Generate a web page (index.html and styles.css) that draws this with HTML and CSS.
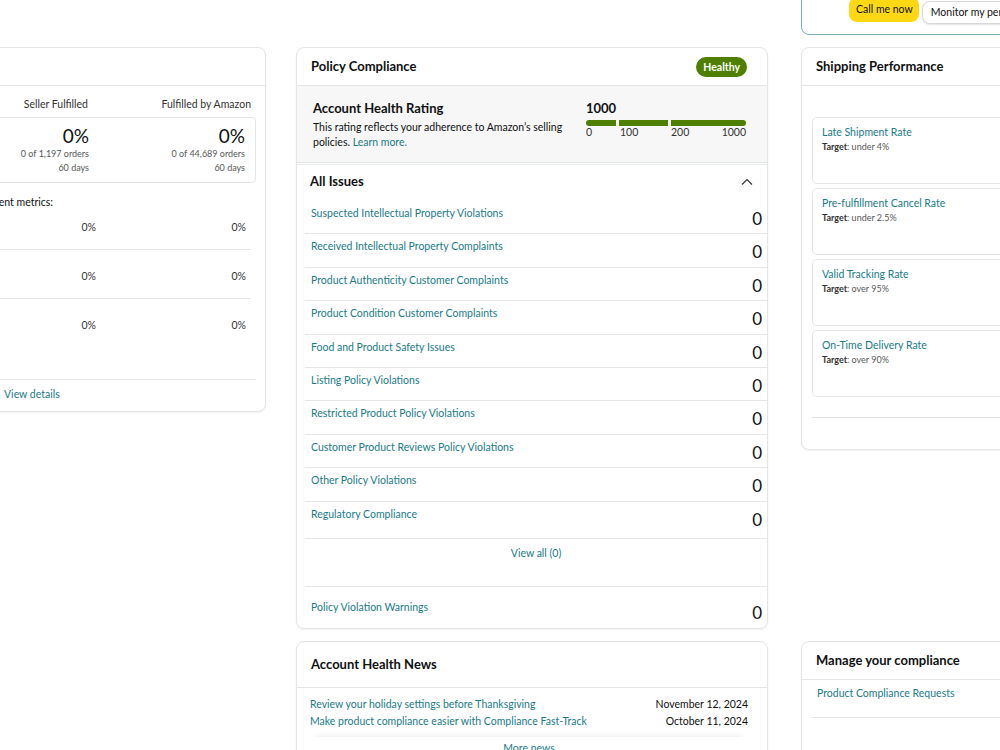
FILE: index.html
```html
<!DOCTYPE html>
<html lang="en">
<head>
<meta charset="utf-8">
<title>Account Health</title>
<link rel="stylesheet" href="styles.css">
</head>
<body>
<div class="page">
  <div class="banner">
    <span class="btn btn-call">Call me now</span>
    <span class="btn btn-monitor">Monitor my performance</span>
  </div>

  <div class="card card-left">
    <div class="card-head"><span>Customer Service Performance</span></div>
    <div class="left-body">
      <div class="fhead">
        <span class="flabel"></span>
        <span class="fa">Seller Fulfilled</span>
        <span class="fb">Fulfilled by Amazon</span>
      </div>
      <div class="odr-box">
        <div class="odr-label">Order Defect Rate</div>
        <div class="odr-a">
          <div class="pct">0%</div>
          <div class="small">0 of 1,197 orders</div>
          <div class="small">60 days</div>
        </div>
        <div class="odr-b">
          <div class="pct">0%</div>
          <div class="small">0 of 44,689 orders</div>
          <div class="small">60 days</div>
        </div>
      </div>
      <div class="metrics-intro"><span>Order Defect Rate consists of three different metrics:</span></div>
      <div class="mrow mrow-first">
        <span class="mlabel">Negative feedback</span>
        <span class="ma">0%</span>
        <span class="mb">0%</span>
      </div>
      <div class="mrow">
        <span class="mlabel">A-to-z claims</span>
        <span class="ma">0%</span>
        <span class="mb">0%</span>
      </div>
      <div class="mrow mrow-last">
        <span class="mlabel">Chargebacks</span>
        <span class="ma">0%</span>
        <span class="mb">0%</span>
      </div>
      <div class="left-foot"><span class="link">View details</span></div>
    </div>
  </div>

  <div class="card card-policy">
    <div class="card-head">
      <span>Policy Compliance</span>
      <span class="badge">Healthy</span>
    </div>
    <div class="ahr">
      <div class="ahr-text">
        <div class="ahr-title">Account Health Rating</div>
        <div class="ahr-desc">This rating reflects your adherence to Amazon’s selling policies. <span class="link">Learn more.</span></div>
      </div>
      <div class="rating">
        <div class="rating-num">1000</div>
        <div class="bar">
          <span class="seg seg1"></span>
          <span class="seg seg2"></span>
          <span class="seg seg3"></span>
        </div>
        <div class="bar-labels">
          <span class="lab1">0</span>
          <span class="lab2">100</span>
          <span class="lab3"><span>200</span><span>1000</span></span>
        </div>
      </div>
    </div>
    <div class="issues">
      <div class="issues-head">
        <span>All Issues</span>
        <svg class="chev" width="12" height="8" viewBox="0 0 12 8"><polyline points="1,6.5 6,1.5 11,6.5" fill="none" stroke="#333" stroke-width="1.2"/></svg>
      </div>
      <div class="irow"><span class="link">Suspected Intellectual Property Violations</span><span class="zero">0</span></div>
      <div class="irow"><span class="link">Received Intellectual Property Complaints</span><span class="zero">0</span></div>
      <div class="irow"><span class="link">Product Authenticity Customer Complaints</span><span class="zero">0</span></div>
      <div class="irow"><span class="link">Product Condition Customer Complaints</span><span class="zero">0</span></div>
      <div class="irow"><span class="link">Food and Product Safety Issues</span><span class="zero">0</span></div>
      <div class="irow"><span class="link">Listing Policy Violations</span><span class="zero">0</span></div>
      <div class="irow"><span class="link">Restricted Product Policy Violations</span><span class="zero">0</span></div>
      <div class="irow"><span class="link">Customer Product Reviews Policy Violations</span><span class="zero">0</span></div>
      <div class="irow"><span class="link">Other Policy Violations</span><span class="zero">0</span></div>
      <div class="irow irow-last"><span class="link">Regulatory Compliance</span><span class="zero">0</span></div>
      <div class="viewall"><span class="link">View all (0)</span></div>
      <div class="warn"><span class="link">Policy Violation Warnings</span><span class="zero">0</span></div>
    </div>
  </div>

  <div class="col-right">
    <div class="card card-ship">
      <div class="card-head"><span>Shipping Performance</span></div>
      <div class="ship-body">
        <div class="sbox"><div class="link">Late Shipment Rate</div><div class="target"><b>Target</b>: under 4%</div></div>
        <div class="sbox"><div class="link">Pre-fulfillment Cancel Rate</div><div class="target"><b>Target</b>: under 2.5%</div></div>
        <div class="sbox"><div class="link">Valid Tracking Rate</div><div class="target"><b>Target</b>: over 95%</div></div>
        <div class="sbox"><div class="link">On-Time Delivery Rate</div><div class="target"><b>Target</b>: over 90%</div></div>
        <div class="ship-foot"></div>
      </div>
    </div>
  </div>

  <div class="empty"></div>

  <div class="card card-news">
    <div class="card-head news-head"><span>Account Health News</span></div>
    <div class="news-body">
      <div class="nrow"><span class="link">Review your holiday settings before Thanksgiving</span><span>November 12, 2024</span></div>
      <div class="nrow"><span class="link">Make product compliance easier with Compliance Fast-Track</span><span>October 11, 2024</span></div>
      <div class="more"><span class="link">More news</span></div>
    </div>
  </div>

  <div class="col-right">
    <div class="card card-manage">
      <div class="card-head"><span>Manage your compliance</span></div>
      <div class="manage-body">
        <div class="link">Product Compliance Requests</div>
        <div class="manage-foot"></div>
      </div>
    </div>
  </div>
</div>
</body>
</html>
```

FILE: styles.css
```css
html, body {
  margin: 0;
  padding: 0;
}
body {
  width: 1000px;
  height: 750px;
  overflow: hidden;
  background: #fff;
  color: #0f1111;
  font-family: Lato, "Liberation Sans", Arial, sans-serif;
  font-size: 10.5px;
  line-height: 15px;
}
.page {
  margin: -45px 0 0 -206px;
  display: grid;
  grid-template-columns: 472px 472px 475px;
  column-gap: 30px;
  row-gap: 12px;
  align-items: start;
}
.link {
  color: #1a7a88;
}

/* banner */
.banner {
  grid-column: 3;
  margin-left: 3px;
  height: 80px;
  box-sizing: border-box;
  border: 1px solid #79b3bc;
  border-radius: 8px;
  display: flex;
  align-items: flex-end;
  gap: 3px;
  padding: 0 0 11px 47px;
}
.btn {
  display: block;
  height: 25px;
  line-height: 25px;
  padding: 0 8px;
  border-radius: 8px;
  font-size: 10.5px;
  white-space: nowrap;
  box-sizing: border-box;
}
.btn-call {
  background: #ffd814;
  padding: 0 6px 0 7px;
  margin-bottom: 1px;
}
.btn-monitor {
  background: #fff;
  border: 1px solid #d5d9d9;
  height: 23px;
  line-height: 21px;
  margin-bottom: -1px;
  box-shadow: 0 1px 2px rgba(15, 17, 17, 0.12);
}

/* cards */
.card {
  background: #fff;
  border: 1px solid #e3e6e6;
  border-radius: 8px;
  box-shadow: 0 1px 2px rgba(0, 0, 0, 0.06);
  overflow: hidden;
}
.card-head {
  height: 38px;
  box-sizing: border-box;
  border-bottom: 1px solid #e3e6e6;
  display: flex;
  align-items: center;
  justify-content: space-between;
  padding: 0 20px 0 14px;
  font-size: 13px;
  font-weight: 700;
}
.badge {
  background: #4e7f00;
  color: #fff;
  font-size: 10.5px;
  font-weight: 700;
  height: 20px;
  line-height: 20px;
  padding: 0 7px;
  border-radius: 10px;
}

/* left card */
.card-left .card-head {
  justify-content: flex-start;
}
.left-body {
  padding: 11px 9px 0 10px;
}
.fhead {
  display: flex;
  padding-right: 5px;
  color: #333;
}
.flabel {
  flex: 1;
}
.fa {
  width: 150px;
  text-align: right;
}
.fb {
  width: 163px;
  text-align: right;
}
.odr-box {
  margin-top: 5px;
  border: 1px solid #e3e6e6;
  border-radius: 4px;
  padding: 7px 10px;
  display: flex;
}
.odr-label {
  flex: 1;
  font-weight: 700;
}
.odr-a {
  width: 150px;
  text-align: right;
}
.odr-b {
  width: 156px;
  text-align: right;
}
.pct {
  font-size: 19px;
  line-height: 22px;
}
.small {
  font-size: 9px;
  line-height: 14px;
  color: #565959;
}
.metrics-intro {
  width: 248px;
  margin-top: 12px;
  display: flex;
  justify-content: flex-end;
  white-space: nowrap;
}
.mrow {
  display: flex;
  margin-right: 5px;
  padding-right: 5px;
  height: 49px;
  box-sizing: border-box;
  border-bottom: 1px solid #e7e7e7;
  padding-top: 19px;
  color: #333;
}
.mrow-first {
  height: 40px;
  padding-top: 10px;
}
.mrow-last {
  border-bottom: none;
  height: 80px;
}
.mlabel {
  flex: 1;
}
.ma {
  width: 100px;
  text-align: right;
}
.mb {
  width: 150px;
  text-align: right;
}
.left-foot {
  border-top: 1px solid #e3e6e6;
  padding: 7px 0 9px 199px;
}

/* policy card */
.ahr {
  background: #f7f7f7;
  display: flex;
  padding: 14px 21px 12px 16px;
  border-bottom: 1px solid #e3e6e6;
}
.ahr-text {
  width: 262px;
}
.ahr-title {
  font-size: 13px;
  font-weight: 700;
  line-height: 17px;
}
.ahr-desc {
  margin-top: 3px;
  color: #0f1111;
}
.rating {
  margin-left: auto;
  width: 160px;
}
.rating-num {
  font-size: 13px;
  font-weight: 700;
  line-height: 17px;
}
.bar {
  margin-top: 3px;
  display: flex;
  gap: 3px;
  height: 6px;
}
.seg {
  display: block;
  height: 6px;
  background: #4e7f00;
}
.seg1 {
  width: 30px;
  border-radius: 3px 0 0 3px;
}
.seg2 {
  width: 49px;
}
.seg3 {
  width: 75px;
  border-radius: 0 3px 3px 0;
}
.bar-labels {
  display: flex;
  gap: 3px;
  line-height: 12px;
  color: #333;
}
.lab1 {
  width: 30px;
}
.lab2 {
  width: 49px;
  padding-left: 1px;
  box-sizing: border-box;
}
.lab3 {
  width: 75px;
  display: flex;
  justify-content: space-between;
}
.issues {
  margin-top: 1px;
  border-top: 1px solid #eaeded;
}
.issues-head {
  height: 36px;
  box-sizing: border-box;
  padding: 8px 14px 0 13px;
  display: flex;
  justify-content: space-between;
  align-items: flex-start;
  font-size: 13px;
  font-weight: 700;
  line-height: 17px;
}
.chev {
  margin-top: 5px;
}
.irow {
  margin-left: 8px;
  height: 33.4px;
  box-sizing: border-box;
  border-bottom: 1px solid #e7e7e7;
  display: flex;
  justify-content: space-between;
  align-items: flex-start;
  padding: 0 5px 0 6px;
}
.irow .link {
  margin-top: 5px;
}
.zero {
  font-size: 17px;
  line-height: 20px;
  margin-top: 8px;
}
.irow-last {
  border-bottom: none;
  height: 36px;
}
.viewall {
  margin-left: 8px;
  height: 49px;
  box-sizing: border-box;
  border-top: 1px solid #e7e7e7;
  border-bottom: 1px solid #e7e7e7;
  padding-top: 7px;
  text-align: center;
}
.warn {
  margin-left: 8px;
  height: 41px;
  box-sizing: border-box;
  display: flex;
  justify-content: space-between;
  align-items: flex-start;
  padding: 0 5px 0 6px;
}
.warn .link {
  margin-top: 13px;
}
.warn .zero {
  margin-top: 16px;
}

/* right column */
.col-right {
  padding-left: 3px;
}
.ship-body {
  padding: 31px 0 31px 10px;
}
.sbox {
  height: 67px;
  box-sizing: border-box;
  border: 1px solid #e3e6e6;
  border-radius: 5px;
  padding: 7px 9px;
  margin-bottom: 4px;
}
.target {
  font-size: 9px;
  line-height: 13px;
  color: #565959;
}
.target b {
  color: #333;
  font-weight: 700;
}
.ship-foot {
  margin-top: 20px;
  border-top: 1px solid #e3e6e6;
}
.manage-body {
  padding: 6px 0 40px 0;
}
.manage-body .link {
  padding-left: 15px;
}
.manage-foot {
  margin: 16px 0 0 10px;
  border-top: 1px solid #e3e6e6;
}

/* news */
.news-head {
  height: 46px;
}
.news-body {
  padding: 8px 19px 0 13px;
}
.nrow {
  display: flex;
  justify-content: space-between;
  line-height: 17px;
}
.more {
  margin-top: 7px;
  text-align: center;
  padding-top: 4px;
  box-shadow: 0 -5px 8px -6px rgba(0, 0, 0, 0.12);
  height: 30px;
}
```
